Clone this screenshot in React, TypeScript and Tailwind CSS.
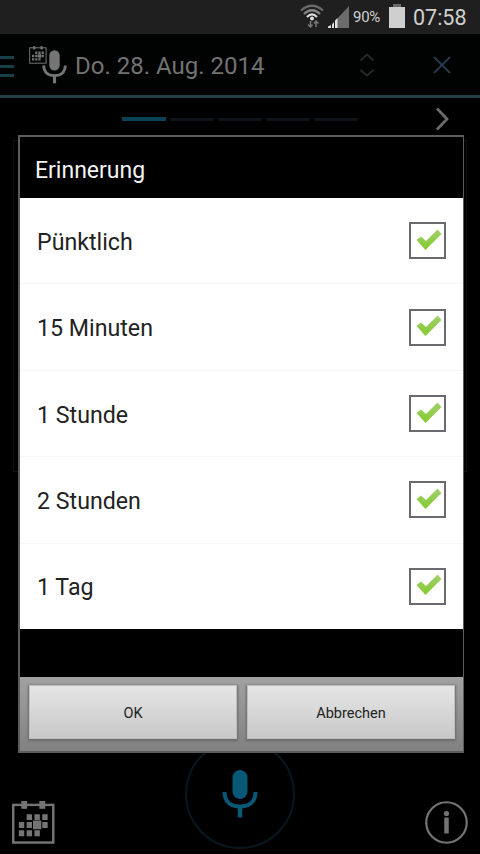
const reminders = ["Pünktlich", "15 Minuten", "1 Stunde", "2 Stunden", "1 Tag"]

function StatusBar() {
  return (
    <div className="h-[34px] shrink-0 bg-[#1f1f1f] flex items-center pl-[300px] text-[#d0d0d0]">
      <svg width="24" height="24" viewBox="0 0 24 24" className="-mt-[2px]" fill="none">
        <path d="M1 6.500Q12 -3 23 6.500" stroke="#6a6a6a" strokeWidth="2.200" />
        <path d="M4 10Q12 2.500 20 10" stroke="#858585" strokeWidth="2.200" />
        <path d="M7 13Q12 8 17 13" stroke="#dedede" strokeWidth="2.200" />
        <circle cx="12" cy="14.500" r="2" fill="#dedede" />
        <path d="M10.500 17v6M8 20.500l2.500 2.500 2-2.500M16 23v-6M14 19.500l2-2.500 2.500 2.500" stroke="#777" strokeWidth="1.500" />
      </svg>
      <svg width="22" height="22" viewBox="0 0 22 22" className="ml-[4px]">
        <path d="M9 13L21 0V22H9Z" fill="#6b6b6b" />
        <path d="M0 22V20.500L3 19V22ZM4 22V18.500L6 16V22ZM7 22V14.500L9.500 12V22Z" fill="#e0e0e0" />
      </svg>
      <span className="ml-[3px] mt-px w-[30px] text-[15px] tracking-[-0.3px] whitespace-nowrap">90%</span>
      <svg width="16" height="24" viewBox="0 0 16 24" className="ml-[6px] -mt-[2px]">
        <rect x="4" y="0" width="8" height="4" fill="#6b6b6b" />
        <rect x="0" y="3" width="16" height="21" fill="#cfcfcf" />
      </svg>
      <span className="ml-[8px] mt-px text-[21.500px] leading-none">07:58</span>
    </div>
  )
}

function CalendarIcon({ className }: { className?: string }) {
  return (
    <svg viewBox="0 0 44 45" className={className} fill="#747474">
      <rect x="1.250" y="4.500" width="41" height="38.500" fill="none" stroke="#747474" strokeWidth="2.500" />
      <rect x="9.500" y="0.500" width="6" height="8" />
      <rect x="28" y="0.500" width="6" height="8" />
      <path d="M15 14h5.500v6H15zM23 14h5.500v6H23zM31 14h5.500v6H31zM7 22h5.500v6H7zM15 22h5.500v6H15zM21.500 20.500h8.500v9h-8.500zM31 22h5.500v6H31zM7 30.500h5.500v6H7zM15 30.500h5.500v6H15zM23 30.500h5.500v6H23z" />
    </svg>
  )
}

function MicIcon({ className }: { className?: string }) {
  return (
    <svg viewBox="0 0 36 50" className={className} fill="none" stroke="currentColor">
      <rect x="10.500" y="1" width="15" height="29" rx="7.500" fill="currentColor" stroke="none" />
      <path d="M2.500 23C2.500 33 9 37.500 18 37.500S33.500 33 33.500 23" strokeWidth="4" />
      <path d="M18 37v11.500" strokeWidth="4.500" />
    </svg>
  )
}

function Header() {
  return (
    <header className="h-[64px] shrink-0 border-b-[3px] border-[#263f48] flex items-center bg-[#010202]">
      <div className="w-[14px] mt-[4px] flex flex-col gap-[6px]">
        <div className="h-[3px] bg-[#164149]" />
        <div className="h-[3px] bg-[#164149]" />
        <div className="h-[3px] bg-[#164149]" />
      </div>
      <CalendarIcon className="ml-[15px] -mt-[19px] w-[18px] h-[18px]" />
      <MicIcon className="-ml-[5px] mt-[5px] w-[25px] h-[36px] text-[#757575]" />
      <span className="ml-[8px] mt-[2px] w-[191px] text-[24px] text-[#727272] whitespace-nowrap">Do. 28. Aug. 2014</span>
      <svg width="16" height="24" viewBox="0 0 16 24" className="ml-[93px]" fill="none" stroke="#222a30" strokeWidth="2">
        <path d="M1.500 7.500L8 1.500l6.500 6M1.500 17L8 22.500l6.500-5.500" />
      </svg>
      <svg width="18" height="18" viewBox="0 0 18 18" className="ml-[58px]" fill="none" stroke="#27394c" strokeWidth="2">
        <path d="M1 1l16 16M17 1L1 17" />
      </svg>
    </header>
  )
}

function Pager() {
  return (
    <div className="h-[42px] shrink-0 flex items-center pl-[122px]">
      <div className="flex items-center gap-[4px]">
        <div className="w-[44px] h-[4px] bg-[#0b4355]" />
        <div className="w-[44px] h-[3px] bg-[#0c1216]" />
        <div className="w-[44px] h-[3px] bg-[#0c1216]" />
        <div className="w-[44px] h-[3px] bg-[#0c1216]" />
        <div className="w-[44px] h-[3px] bg-[#0c1216]" />
      </div>
      <svg width="14" height="24" viewBox="0 0 14 24" className="ml-[77px]" fill="none" stroke="#6b6b6b" strokeWidth="2.800">
        <path d="M2 1.500L12 12 2 22.500" />
      </svg>
    </div>
  )
}

function ReminderDialog() {
  return (
    <div className="absolute left-[18px] top-[135px] w-[446px] h-[618px] border-2 border-r border-[#5c5c5c] bg-black flex flex-col">
      <h2 className="h-[61px] shrink-0 pl-[15px] pt-[8px] flex items-center text-[23px] text-[#f3f3f3]">Erinnerung</h2>
      <ul className="h-[431px] shrink-0 flex flex-col bg-white divide-y divide-[#f5f5f5]">
        {reminders.map((label) => (
          <li key={label} className="flex-1 flex items-center justify-between pl-[17px] pr-[17px] text-[23.200px] text-[#222]">
            <span className="pt-[3px]">{label}</span>
            <span className="w-[37px] h-[37px] border-2 border-[#6b6870] flex items-center justify-center">
              <Check />
            </span>
          </li>
        ))}
      </ul>
      <div className="h-[48px] shrink-0" />
      <div className="flex-1 flex gap-[10px] pl-[9px] pr-[8px] pt-[8px] pb-[12px] bg-linear-to-b from-[#a2a2a2] to-[#818181] text-[14.500px] text-[#222]">
        <button className="flex-1 pt-[3px] border border-[#bdbdbd] bg-linear-to-b from-[#e6e6e6] to-[#c8c8c8] shadow-[0_1px_2px_1px_#6b6b6b]">OK</button>
        <button className="flex-1 pt-[3px] border border-[#bdbdbd] bg-linear-to-b from-[#e6e6e6] to-[#c8c8c8] shadow-[0_1px_2px_1px_#6b6b6b]">Abbrechen</button>
      </div>
    </div>
  )
}

function Check() {
  return (
    <svg width="26" height="22" viewBox="0 0 26 22" className="-mt-[2px] ml-[2px]">
      <defs>
        <linearGradient id="check" x1="0" y1="0" x2="0" y2="1">
          <stop offset="0" stopColor="#a3cf70" />
          <stop offset="1" stopColor="#83ca2c" />
        </linearGradient>
      </defs>
      <path d="M0.500 11L5 7.500l5 4.500L21.500 0.500 25.500 5 9.500 21Z" fill="url(#check)" />
    </svg>
  )
}

export default function App() {
  return (
    <div className="relative w-[480px] h-[854px] overflow-hidden bg-black flex flex-col font-[Roboto,sans-serif]">
      <StatusBar />
      <Header />
      <Pager />
      <div className="h-[332px] mx-[13px] border border-[#101010]" />
      <div className="flex-1" />
      <footer className="flex items-end justify-between pl-[12px] pr-[12px] pb-[5px]">
        <CalendarIcon className="w-[43px] h-[45px] mb-[4px]" />
        <div className="w-[110px] h-[110px] -ml-px rounded-full border-2 border-[#071820] flex items-center justify-center">
          <MicIcon className="w-[36px] h-[50px] text-[#0a5878]" />
        </div>
        <svg width="43" height="43" viewBox="0 0 43 43" className="mb-[5px]" fill="none" stroke="#747474">
          <circle cx="21.500" cy="21.500" r="20.250" strokeWidth="2.200" />
          <circle cx="21.500" cy="12.500" r="2.600" fill="#747474" stroke="none" />
          <path d="M21.500 16.500v16" strokeWidth="4.500" />
        </svg>
      </footer>
      <ReminderDialog />
    </div>
  )
}
